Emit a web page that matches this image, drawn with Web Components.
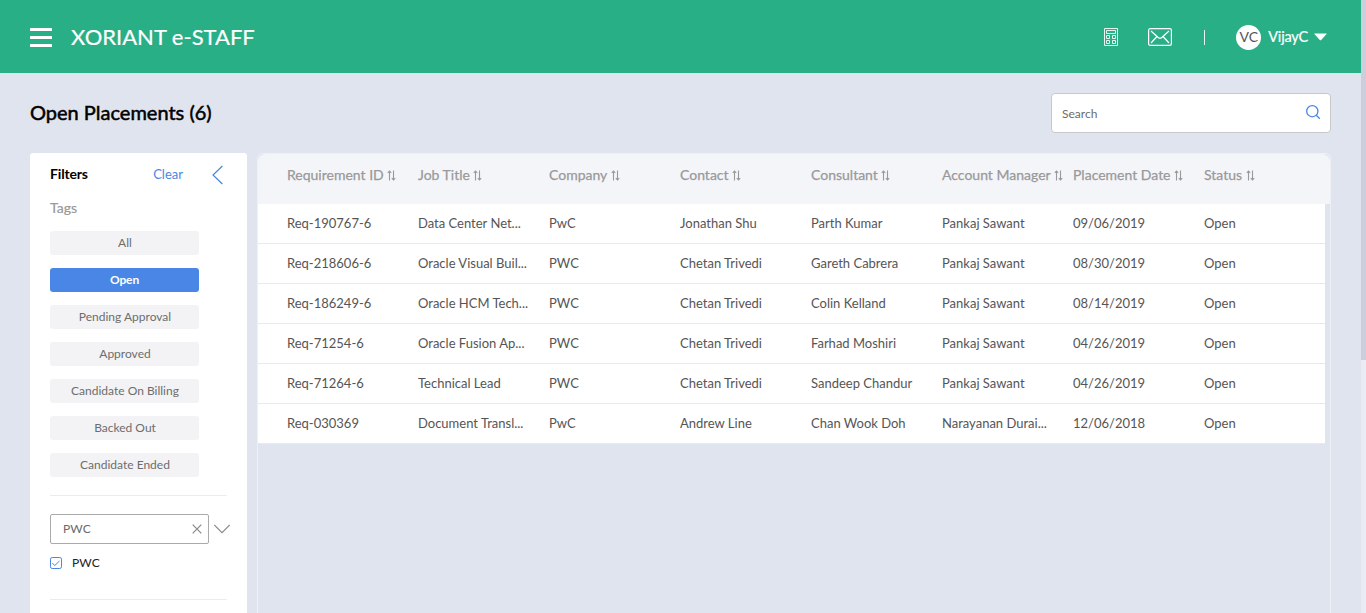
<!DOCTYPE html>
<html lang="en">
<head>
<meta charset="utf-8">
<title>Open Placements</title>
<style>
html,body{margin:0;height:100%;overflow:hidden}
body{font-family:Lato,"Liberation Sans",sans-serif;background:#e0e4ee}
</style>
</head>
<body>
<staff-app></staff-app>
<script>
const define = (name, html, setup) => customElements.define(name, class extends HTMLElement {
  constructor() {
    super();
    const t = document.createElement('template');
    t.innerHTML = html;
    this.attachShadow({mode: 'open'}).append(t.content.cloneNode(true));
  }
  connectedCallback() { if (setup) setup(this, this.shadowRoot); }
});

define('app-header', `<style>
:host{display:flex;align-items:center;height:73px;box-sizing:border-box;padding:0 34px 0 30px;background:#29af86;color:#fff}
svg{display:block;flex:none}
h1{margin:0 auto 0 19px;font-size:22px;line-height:28px;font-weight:400;white-space:nowrap;-webkit-text-stroke:.2px #fff}
.calc{margin-right:30px}.mail{margin-right:32px}
.sep{width:1px;height:15px;background:#e9f7f3;margin:2px 31px 0 0}
.avatar{width:25px;height:25px;border-radius:50%;background:#fff;color:#555;font-size:14px;line-height:24px;text-align:center;margin:1px 7px 0 0}
.user{font-size:14.500px;line-height:20px;margin:0 6px 0 0;letter-spacing:-.2px;-webkit-text-stroke:.2px #fff}
</style>
<svg width="22" height="19" viewBox="0 0 22 19" fill="#fff" style="margin-top:2px"><rect width="22" height="3" rx=".6"/><rect y="8" width="22" height="3" rx=".6"/><rect y="16" width="22" height="3" rx=".6"/></svg>
<h1><slot></slot></h1>
<svg class="calc" width="14" height="18" viewBox="0 0 14 18" fill="none" stroke="#e4f6f0" stroke-width="1"><path d="M.5.5h13v17H.5zM2.500 2.500h9v3h-9zM2.500 7.500h3v3h-3zM8.500 7.500h3v3h-3zM2.500 12.500h3v3h-3zM8.500 12.500h3v3h-3z"/></svg>
<svg class="mail" width="24" height="18" viewBox="0 0 24 18" fill="none" stroke="#fff" stroke-width="1.200"><rect x=".6" y=".6" width="22.800" height="16.800" rx="1.700"/><path d="M3 3l7.200 6.500q1.800 1.400 3.600 0L21 3M3 15l6-6.500M21 15l-6-6.500"/></svg>
<span class="sep"></span>
<span class="avatar">VC</span><span class="user">VijayC</span>
<svg width="13" height="8" viewBox="0 0 13 8" fill="#fff"><path d="M.6.500h11.800q.6 0 .2.500L7.200 7q-.7.600-1.400 0L.4 1Q0 .500.600.500z"/></svg>`);

define('search-box', `<style>
:host{display:flex;align-items:center;justify-content:space-between;box-sizing:border-box;width:280px;height:40px;padding:0 9px 0 10px;background:#fff;border:1px solid #c8c8c8;border-radius:4px;color:#6c6c6c;font-size:12px}
svg{margin-top:-3px}
</style><span><slot></slot></span>
<svg width="16" height="16" viewBox="0 0 16 16" fill="none" stroke="#4a86e5" stroke-width="1.300"><circle cx="7.300" cy="7.200" r="5.600"/><path d="M11.300 11.200L14.800 14.700"/></svg>`);

define('tag-button', `<style>
:host{display:block;width:149px;height:24px;border-radius:3px;background:#f3f3f5;color:#6d6d6d;font-size:12px;line-height:24px;text-align:center;text-indent:1px}
:host([active]){background:#4a86e5;color:#fff;font-weight:700;letter-spacing:-.1px;text-indent:0}
</style><slot></slot>`);

define('filter-panel', `<style>
:host{display:block;box-sizing:border-box;width:217px;height:480px;padding:0 20px;background:#fff;border-radius:3px 3px 0 0}
svg{display:block;flex:none}
.head{display:flex;align-items:center;height:41px;padding-bottom:2px}
b{font-size:14px;letter-spacing:-.15px}.clear{margin-left:auto;color:#4a86e5;font-size:13px;margin-right:29px}
.arrow{margin:2px 4px 0 0}
.tags{font-size:14px;line-height:18px;color:#999;margin:3px 0 14px;-webkit-text-stroke:.2px #999}
.list{display:flex;flex-direction:column;gap:13px;padding-bottom:18px;border-bottom:1px solid #ececec}
.pick{display:flex;align-items:center;gap:5px;margin:18px -4px 0 0}
.pick>svg{margin-top:-1px}
.field{display:flex;align-items:center;justify-content:space-between;box-sizing:border-box;width:159px;height:30px;border:1px solid #aaa;border-radius:2px;padding:0 6px 2px 12px;font-size:12px;color:#6a6a6a;letter-spacing:.1px}
.field svg{margin-top:1px}
.opt{display:flex;align-items:center;gap:10px;font-size:12px;height:38px;padding-bottom:17px;border-bottom:1px solid #ececec;color:#222;letter-spacing:.1px}
.opt span{margin-top:-2px}
</style>
<div class="head"><b>Filters</b><span class="clear">Clear</span><svg class="arrow" width="11" height="20" viewBox="0 0 11 20" fill="none" stroke="#4a86e5" stroke-width="1.200"><path d="M10.400 1L1 10l9.400 9"/></svg></div>
<div class="tags">Tags</div>
<div class="list"><tag-button>All</tag-button><tag-button active>Open</tag-button><tag-button>Pending Approval</tag-button><tag-button>Approved</tag-button><tag-button>Candidate On Billing</tag-button><tag-button>Backed Out</tag-button><tag-button>Candidate Ended</tag-button></div>
<div class="pick"><div class="field"><span>PWC</span><svg width="10" height="10" viewBox="0 0 10 10" stroke="#888" stroke-width="1.200"><path d="M.7.700l8.600 8.600M9.300.700L.7 9.300"/></svg></div>
<svg width="16" height="10" viewBox="0 0 16 10" fill="none" stroke="#888" stroke-width="1.100"><path d="M.3 1L8 8.700 15.700 1"/></svg></div>
<div class="opt"><svg width="12" height="12" viewBox="0 0 12 12" fill="none" stroke="#4a86e5"><rect x=".5" y=".5" width="11" height="11" rx="1.700"/><path d="M2.300 6.200L4.800 8.500 9.500 4"/></svg><span>PWC</span></div>`);

define('sort-heading', `<style>
:host{display:flex;align-items:center;white-space:nowrap;color:#999;font-size:14px;line-height:18px;gap:3.500px;-webkit-text-stroke:.25px #999}
svg{margin-top:1px;flex:none}
</style><span><slot></slot></span><svg width="9" height="11" viewBox="0 0 9 11" fill="none" stroke="#999" stroke-width="1.100"><path d="M2.500 10.500V1M.8 2.800L2.500 1l1.700 1.800M6.500 .5v9.500M4.800 8.200l1.700 1.800 1.700-1.800"/></svg>`);

define('placement-table', `<style>
:host{display:block;box-sizing:border-box;width:1074px;height:480px;border:1px solid #edf0f5;border-bottom:0;border-radius:6px 6px 0 0}
.head,.row{display:grid;grid-template-columns:repeat(7,131px) 1fr;box-sizing:border-box;align-items:center;padding-left:29px}
.head{height:50px;background:#f4f5f9;padding-bottom:8px;border-radius:8px 8px 0 0}
.row{width:1067px;height:40px;background:#fff;border-bottom:1px solid #e8e9ef;color:#555;font-size:13px;line-height:18px;padding-bottom:2px}
.row span{overflow:hidden;text-overflow:ellipsis;white-space:nowrap;margin-right:18px}
</style><div class="head"></div><div class="body"></div>`, (el, root) => {
  for (const h of ['Requirement ID','Job Title','Company','Contact','Consultant','Account Manager','Placement Date','Status']) {
    const s = document.createElement('sort-heading'); s.textContent = h; root.querySelector('.head').append(s);
  }
  const rows = [
    ['Req-190767-6','Data Center Net...','PwC','Jonathan Shu','Parth Kumar','Pankaj Sawant','09/06/2019','Open'],
    ['Req-218606-6','Oracle Visual Buil...','PWC','Chetan Trivedi','Gareth Cabrera','Pankaj Sawant','08/30/2019','Open'],
    ['Req-186249-6','Oracle HCM Tech...','PWC','Chetan Trivedi','Colin Kelland','Pankaj Sawant','08/14/2019','Open'],
    ['Req-71254-6','Oracle Fusion Ap...','PWC','Chetan Trivedi','Farhad Moshiri','Pankaj Sawant','04/26/2019','Open'],
    ['Req-71264-6','Technical Lead','PWC','Chetan Trivedi','Sandeep Chandur','Pankaj Sawant','04/26/2019','Open'],
    ['Req-030369','Document Transl...','PwC','Andrew Line','Chan Wook Doh','Narayanan Durai...','12/06/2018','Open']];
  for (const r of rows) {
    const d = document.createElement('div'); d.className = 'row';
    for (const c of r) { const s = document.createElement('span'); s.textContent = c; d.append(s); }
    root.querySelector('.body').append(d);
  }
});

define('scroll-track', `<style>:host{display:block;width:5px;background:#ebebf3}i{display:block;height:360px;background:#cdcedd}</style><i></i>`);

define('staff-app', `<style>
:host{display:flex;width:1366px;height:613px;overflow:hidden}
main{width:1361px}
.title{display:flex;align-items:center;justify-content:space-between;height:80px;padding:0 30px;box-sizing:border-box}
h2{margin:0;padding-bottom:2px;font-size:20px;font-weight:400;color:#000;-webkit-text-stroke:.5px #000}
.cols{display:flex;gap:10px;padding-left:30px}
</style>
<main><app-header>XORIANT e-STAFF</app-header>
<div class="title"><h2>Open Placements (6)</h2><search-box>Search</search-box></div>
<div class="cols"><filter-panel></filter-panel><placement-table></placement-table></div></main>
<scroll-track></scroll-track>`);
</script>
</body>
</html>
